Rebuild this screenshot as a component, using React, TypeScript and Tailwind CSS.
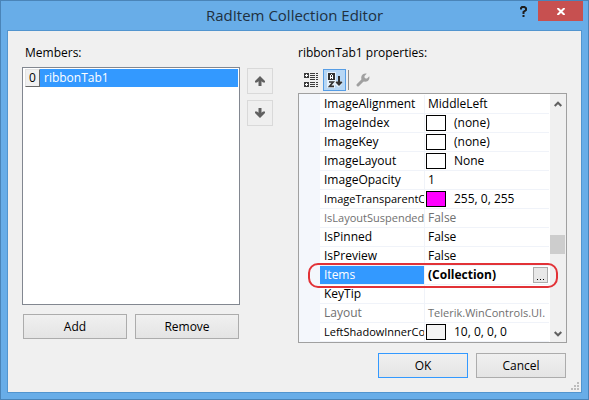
import type { ReactNode } from "react";

type Property = {
  name: string;
  value: string;
  swatch?: "white" | "magenta" | "shade";
  muted?: boolean;
  selected?: boolean;
};

const properties: Property[] = [
  { name: "ImageAlignment", value: "MiddleLeft" },
  { name: "ImageIndex", value: "(none)", swatch: "white" },
  { name: "ImageKey", value: "(none)", swatch: "white" },
  { name: "ImageLayout", value: "None", swatch: "white" },
  { name: "ImageOpacity", value: "1" },
  { name: "ImageTransparentColor", value: "255, 0, 255", swatch: "magenta" },
  { name: "IsLayoutSuspended", value: "False", muted: true },
  { name: "IsPinned", value: "False" },
  { name: "IsPreview", value: "False" },
  { name: "Items", value: "(Collection)", selected: true },
  { name: "KeyTip", value: "" },
  { name: "Layout", value: "Telerik.WinControls.UI.", muted: true },
  { name: "LeftShadowInnerColor", value: "10, 0, 0, 0", swatch: "shade" },
];

const swatchColors = {
  white: "bg-white",
  magenta: "bg-[#ff00ff]",
  shade: "bg-[#f4f4f4]",
};

// Long names and values are set one step smaller so that they fit their column.
const textSize = (text: string) => (text.length > 16 ? "text-[11px]" : "text-[12px]");

function DialogButton({ children, primary, className = "" }: { children: ReactNode; primary?: boolean; className?: string }) {
  return (
    <button
      type="button"
      className={`h-[25px] border bg-linear-to-b from-[#f0f0f0] to-[#e4e4e4] leading-4 ${primary ? "border-[#3399ff]" : "border-[#acacac]"} ${className}`}
    >
      {children}
    </button>
  );
}

function MoveButton({ label, down }: { label: string; down?: boolean }) {
  return (
    <button type="button" aria-label={label} className="flex size-[26px] items-center justify-center border border-[#d9d9d9] bg-[#efefef]">
      <svg width="10" height="10" viewBox="0 0 10 10" className={down ? "rotate-180" : ""} fill="#606060">
        <path d="M5 0 L10 5 V6.5 H8 L6.5 5.2 V10 H3.5 V5.2 L2 6.5 H0 V5 Z" />
      </svg>
    </button>
  );
}

function CategorizedIcon() {
  return (
    <svg width="15" height="16" viewBox="0 0 15 16" shapeRendering="crispEdges">
      <path fill="#3c3c3c" d="M0 1h5v5H0zM0 10h5v5H0zM6 1h5v1H6zM12 1h2v1h-2zM6 3h5v1H6zM12 3h2v1h-2zM6 5h5v1H6zM12 5h2v1h-2zM6 7h5v1H6zM12 7h2v1h-2zM6 10h5v1H6zM12 10h2v1h-2zM6 12h5v1H6zM12 12h2v1h-2zM6 14h5v1H6zM12 14h2v1h-2z" />
      <path fill="#fff" d="M2 2h1v1h1v1H3v1H2V4H1V3h1zM2 11h1v1h1v1H3v1H2v-1H1v-1h1z" />
    </svg>
  );
}

function SortIcon() {
  return (
    <svg width="16" height="16" viewBox="0 0 16 16">
      <path fill="#e6f1fb" d="M0 0h9v9h6v3l-3.500 3.500L8 12.500V16H0z" />
      <g shapeRendering="crispEdges">
        <path fill="#333" d="M1 1h7v7H1z" />
        <path fill="#fff" d="M4 2h1v1H4zM3 3h1v4H3zM5 3h1v4H5zM4 5h1v1H4z" />
      </g>
      <path fill="none" stroke="#333" strokeWidth="1.700" d="M2 10H6.200L2.600 14.300H7" />
      <path fill="none" stroke="#333" strokeWidth="2" d="M12 4V13M9.300 9.800L12 12.500l2.700-2.700" />
    </svg>
  );
}

function WrenchIcon() {
  return (
    <svg width="14" height="14" viewBox="0 0 14 14">
      <path fill="none" stroke="#a0a0a0" strokeWidth="3" strokeLinecap="round" d="M2 12L8 6" />
      <path fill="#a0a0a0" d="M10.7 .7L8.5 3v2.5H11L13.3 3.3C14 6 12.3 8.7 9.4 8.7 6.8 8.7 5 7 5.2 4.4 5.4 1.8 8.2 0 10.7 .7Z" />
    </svg>
  );
}

function Chevron({ down }: { down?: boolean }) {
  return (
    <svg width="8" height="6" viewBox="0 0 8 6" className={down ? "rotate-180" : ""} fill="none" stroke="#606060" strokeWidth="2">
      <path d="M.7 5L4 1.7 7.3 5" />
    </svg>
  );
}

function TitleBar() {
  return (
    <header className="relative flex h-[29px] shrink-0 items-start justify-end pr-[5px]">
      <h1 className="absolute inset-x-0 top-1 text-center text-[15px] leading-5 text-[#20303f]">RadItem Collection Editor</h1>
      <button type="button" aria-label="Help" className="relative flex h-5 w-[30px] items-center justify-center">
        <svg width="7" height="11" viewBox="0 0 7 11" fill="none" stroke="#1f1f1f" strokeWidth="2">
          <path d="M1 3.5V2.2L2 1h2.5L6 2.2V4L3.5 6v2M2.5 10h2" />
        </svg>
      </button>
      <button type="button" aria-label="Close" className="relative flex h-5 w-[45px] items-center justify-center bg-[#c75050]">
        <svg width="8" height="7" viewBox="0 0 8 7" stroke="#fff" strokeWidth="2">
          <path d="M.5 0L7.5 7M7.5 0L.5 7" />
        </svg>
      </button>
    </header>
  );
}

function PropertyRow({ name, value, swatch, muted, selected }: Property) {
  const tone = muted ? "text-[#707070]" : "text-black";
  return (
    <tr className="relative h-[19px]">
      <th
        scope="row"
        className={`overflow-hidden border-r border-b border-[#f0f3f9] p-0 pl-1 text-left font-normal whitespace-nowrap ${selected ? "bg-[#3399ff] text-white" : tone}`}
      >
        <div className={`h-[18px] overflow-hidden leading-[18px] ${textSize(name)}`}>{name}</div>
      </th>
      <td className={`border-b border-[#f0f3f9] p-0 ${tone}`}>
        <div className={`flex h-[18px] items-center overflow-hidden leading-[18px] whitespace-nowrap ${swatch ? "gap-2 pl-px" : "pl-[3px]"} ${selected ? "font-bold" : ""}`}>
          {swatch && <span className={`h-4 w-5 shrink-0 border border-black ${swatchColors[swatch]}`} />}
          <span className={`grow ${textSize(value)}`}>{value}</span>
          {selected && (
            <button type="button" aria-label="Edit items" className="mr-px flex h-4 w-[15px] items-center justify-center gap-px border border-[#acacac] bg-[#e8e8e8]">
              <span className="mt-2 size-px bg-black" />
              <span className="mx-px mt-2 size-px bg-black" />
              <span className="mt-2 size-px bg-black" />
            </button>
          )}
        </div>
        {selected && <div className="pointer-events-none absolute -top-[3px] -right-[9px] -left-3 z-10 h-[25px] rounded-[10px] border-2 border-[#e23237]" />}
      </td>
    </tr>
  );
}

function Members() {
  return (
    <section className="flex flex-col pb-1">
      <h2 id="members-label" className="mb-[6px] pl-[3px] leading-4">Members:</h2>
      <div role="listbox" aria-labelledby="members-label" className="grow border border-[#828790] bg-white p-px">
        <div role="option" aria-selected="true" className="flex h-[18px]">
          <span className="ml-px w-[15px] border border-t-[#e3e3e3] border-r-[#696969] border-b-[#696969] border-l-[#e3e3e3] bg-[#f0f0f0] text-center leading-4">0</span>
          <span className="grow bg-[#3399ff] pl-1 leading-[18px] text-white">ribbonTab1</span>
        </div>
      </div>
      <div className="mt-[9px] flex gap-2 px-px">
        <DialogButton className="flex-1">Add</DialogButton>
        <DialogButton className="flex-1">Remove</DialogButton>
      </div>
    </section>
  );
}

function Properties() {
  return (
    <section className="flex min-w-0 flex-col">
      <h2 className="mb-2 leading-4">ribbonTab1 properties:</h2>
      <div className="mb-[2px] flex h-[22px] items-center">
        <button type="button" aria-label="Categorized" className="flex h-[22px] w-[25px] items-center justify-end pr-1">
          <CategorizedIcon />
        </button>
        <button type="button" aria-label="Alphabetical" className="flex h-[22px] w-[23px] items-center justify-center border border-[#569de5] bg-[#b7d7f5]">
          <SortIcon />
        </button>
        <span className="ml-[2px] h-5 w-px bg-[#8d8d8d]" />
        <button type="button" aria-label="Property pages" disabled className="flex h-[22px] w-7 items-center justify-center">
          <WrenchIcon />
        </button>
      </div>
      <div className="flex border border-[#a0a0a0] bg-white">
        <div className="min-w-0 grow border-l-[21px] border-[#f4f7fc] pt-px">
          <table className="w-full table-fixed border-separate border-spacing-0">
            <colgroup>
              <col className="w-[105px]" />
              <col />
            </colgroup>
            <tbody>
              {properties.map((property) => (
                <PropertyRow key={property.name} {...property} />
              ))}
            </tbody>
          </table>
        </div>
        <div className="ml-px flex w-4 shrink-0 flex-col items-center bg-[#f0f0f0]">
          <div className="flex h-[19px] items-center"><Chevron /></div>
          <div className="flex w-full grow flex-col pt-[122px]">
            <div className="mr-px h-[19px] bg-[#cdcdcd]" />
          </div>
          <div className="flex h-[17px] items-center"><Chevron down /></div>
        </div>
      </div>
    </section>
  );
}

function ResizeGrip() {
  return (
    <svg width="8" height="8" viewBox="0 0 8 8" fill="#bcbcbc" className="absolute right-[2px] bottom-[2px]" aria-hidden="true">
      <path d="M6 0h2v2H6zM3 3h2v2H3zM6 3h2v2H6zM0 6h2v2H0zM3 6h2v2H3zM6 6h2v2H6z" />
    </svg>
  );
}

export default function App() {
  return (
    <div className="flex min-h-screen flex-col border border-[#4a84b8] bg-[#68ade8] font-['Open_Sans','Noto_Sans',sans-serif] text-[12px] text-black">
      <TitleBar />
      <main className="relative mx-[6px] mb-[6px] flex grow flex-col border border-[#5295cf] bg-[#f0f0f0] px-[14px] pt-[14px] pb-[14px]">
        <div className="grid grow grid-cols-[minmax(0,218fr)_58px_minmax(0,269fr)]">
          <Members />
          <div className="flex flex-col gap-[6px] pt-[23px] pl-[7px]">
            <MoveButton label="Move up" />
            <MoveButton label="Move down" down />
          </div>
          <Properties />
        </div>
        <div className="mt-[10px] flex justify-end gap-2 pr-px">
          <DialogButton primary className="w-[90px]">OK</DialogButton>
          <DialogButton className="w-[90px]">Cancel</DialogButton>
        </div>
        <ResizeGrip />
      </main>
    </div>
  );
}
